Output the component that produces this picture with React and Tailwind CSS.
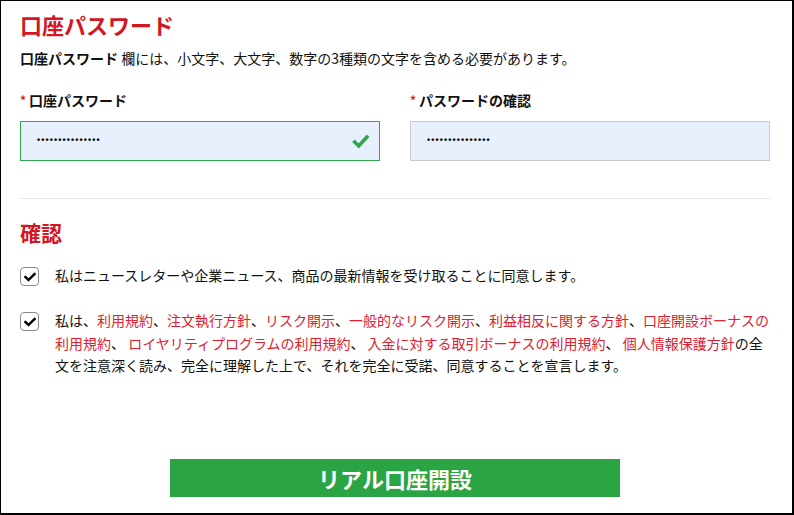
import { useState } from 'react'

const jp = { fontFamily: '"Noto Sans CJK JP", "Noto Sans", sans-serif' }

function CheckIcon({ className }) {
    return (
        <svg viewBox="0 0 512 512" className={className} fill="currentColor">
            <path d="M173.9 439.4 7.5 273c-10-10-10-26.2 0-36.2l36.2-36.2c10-10 26.2-10 36.2 0L192 312.7 432.1 72.6c10-10 26.2-10 36.2 0l36.2 36.2c10 10 10 26.2 0 36.2L210.1 439.4c-10 10-26.2 10-36.2 0z" />
        </svg>
    )
}

// heavier tick used inside the valid field
function ValidTick() {
    return (
        <svg viewBox="0 0 16 16" className="ml-auto w-[17px] h-[17px] text-[#2ea84a]" fill="none" stroke="currentColor" strokeWidth="3.4" strokeLinecap="square">
            <path d="M2.5 8.5 6.3 12.2 14 3.8" />
        </svg>
    )
}

function Dots({ count }) {
    return (
        <span className="text-[9px] tracking-[1.1px] text-black font-bold" style={{ fontFamily: '"Liberation Sans", sans-serif' }}>
            {'\u2022'.repeat(count)}
        </span>
    )
}

function Box({ checked, onToggle }) {
    return (
        <button
            onClick={onToggle}
            className="mt-[3px] w-[19px] h-[19px] shrink-0 rounded-[4px] border border-[#8a8a8a] bg-white flex items-center justify-center"
        >
            {checked && <CheckIcon className="w-[12px] h-[12px] text-black" />}
        </button>
    )
}

function Link({ children }) {
    return <span className="text-[#e0202e] cursor-pointer">{children}</span>
}

export default function App() {
    const [news, setNews] = useState(true)
    const [terms, setTerms] = useState(true)

    return (
        <div className="w-[794px] h-[515px] bg-white border-t border-l border-r-2 border-b-2 border-black pl-[19px] pr-[22px] text-[#111]" style={jp}>
            <h1 className="pt-[9px] h-[37px] text-[22px] leading-[28px] font-bold text-[#d3161f]">口座パスワード</h1>
            <p className="mt-[10px] text-[14px] leading-[20px]">
                <span className="font-bold">口座パスワード</span> 欄には、小文字、大文字、数字の3種類の文字を含める必要があります。
            </p>

            <div className="mt-[22px] grid grid-cols-2 gap-x-[30px]">
                <div>
                    <label className="flex items-center h-[20px] text-[14px] font-bold">
                        <span className="text-[#e01b24] text-[12px] mr-[3px]">*</span>口座パスワード
                    </label>
                    <div className="mt-[11px] h-[40px] border border-[#2ea84a] bg-[#e8f0fe] flex items-center pl-[16px] pr-[10px]">
                        <Dots count={15} />
                        <ValidTick />
                    </div>
                </div>
                <div>
                    <label className="flex items-center h-[20px] text-[14px] font-bold">
                        <span className="text-[#e01b24] text-[12px] mr-[3px]">*</span>パスワードの確認
                    </label>
                    <div className="mt-[11px] h-[40px] border border-[#cbcbcb] bg-[#e8f0fe] flex items-center pl-[16px]">
                        <Dots count={15} />
                    </div>
                </div>
            </div>

            <div className="mt-[37px] h-px bg-[#e8e8e8]" />

            <h2 className="mt-[19px] text-[21px] leading-[28px] font-bold text-[#d3161f]">確認</h2>

            <div className="mt-[18px] flex gap-[16px] text-[14px] leading-[22px]">
                <Box checked={news} onToggle={() => setNews(!news)} />
                <p>私はニュースレターや企業ニュース、商品の最新情報を受け取ることに同意します。</p>
            </div>

            <div className="mt-[23px] flex gap-[16px] text-[14px] leading-[22.5px]">
                <Box checked={terms} onToggle={() => setTerms(!terms)} />
                <p>
                    私は、<Link>利用規約</Link>、<Link>注文執行方針</Link>、<Link>リスク開示</Link>、<Link>一般的なリスク開示</Link>、<Link>利益相反に関する方針</Link>、<Link>口座開設ボーナスの</Link>
                    <br />
                    <Link>利用規約</Link>、 <Link>ロイヤリティプログラムの利用規約</Link>、 <Link>入金に対する取引ボーナスの利用規約</Link>、 <Link>個人情報保護方針</Link>の全
                    <br />
                    文を注意深く読み、完全に理解した上で、それを完全に受諾、同意することを宣言します。
                </p>
            </div>

            <div className="mt-[82px] flex justify-center">
                <button className="w-[450px] h-[38px] bg-[#2ba544] text-white text-[22px] font-bold leading-none">
                    リアル口座開設
                </button>
            </div>
        </div>
    )
}
